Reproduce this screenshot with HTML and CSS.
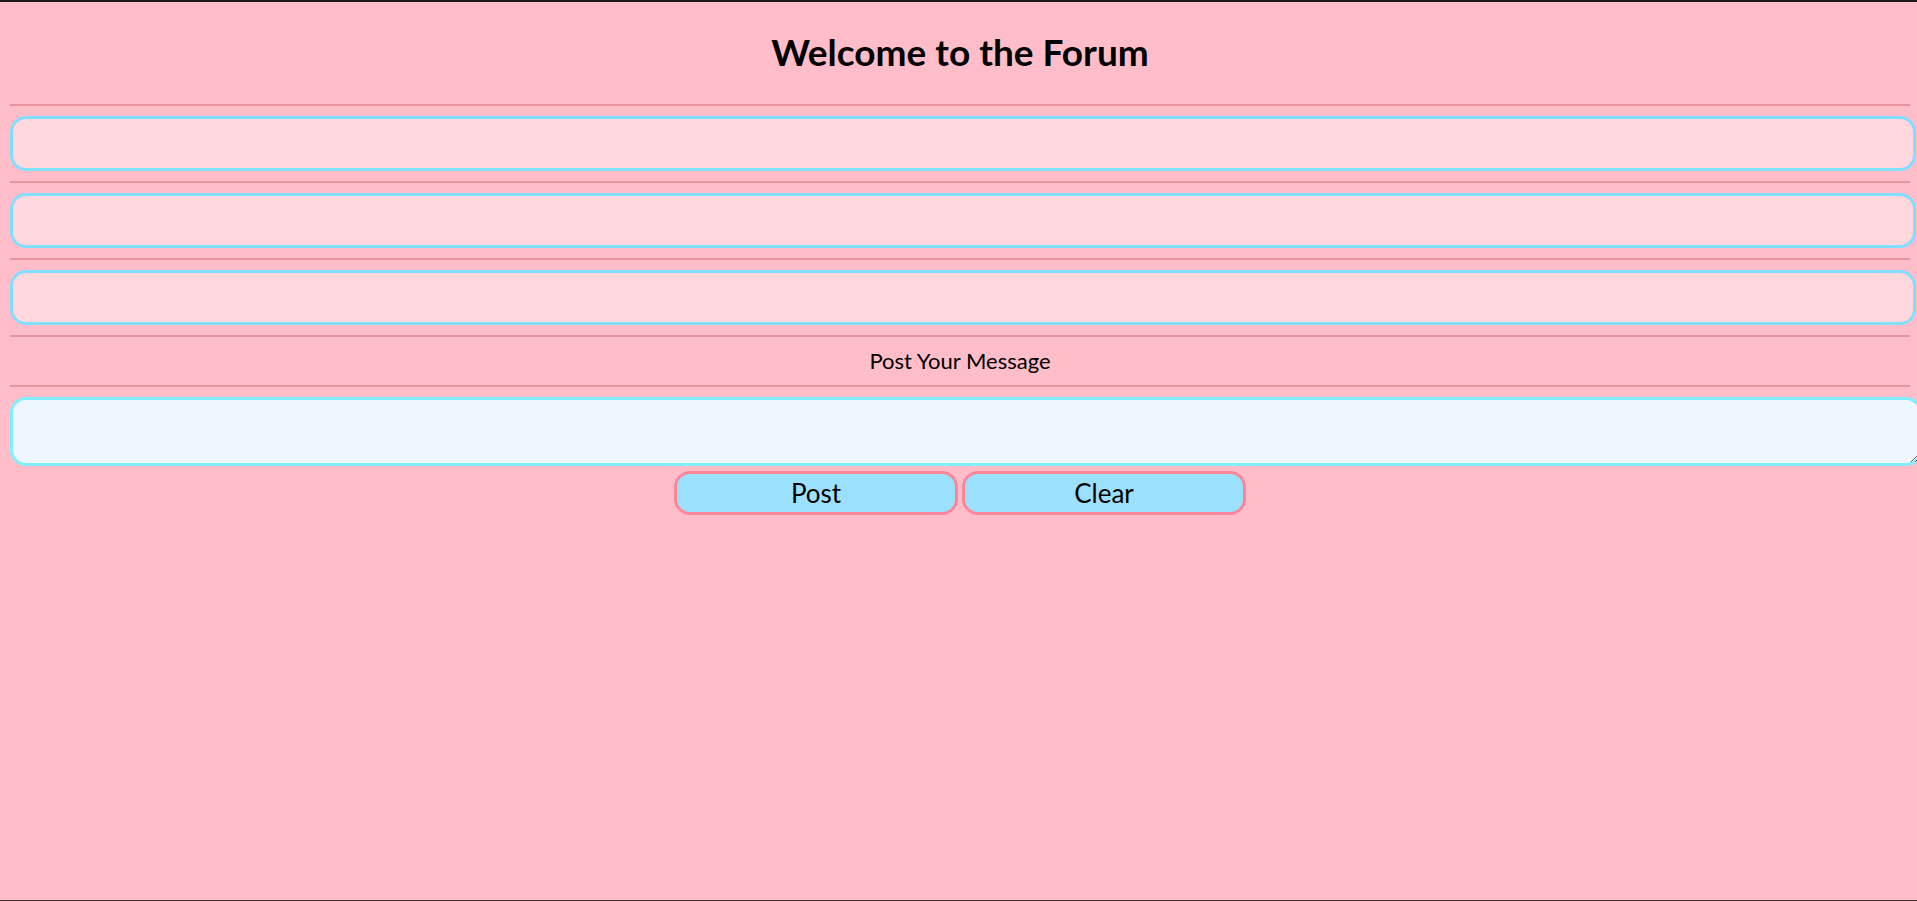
FILE: index.html
```html
<!DOCTYPE html>
<html lang="en">
<head>
<meta charset="utf-8">
<title>Forum</title>
<link rel="stylesheet" href="styles.css">
</head>
<body>
<div class="page">
  <h1 class="title">Welcome to the Forum</h1>
  <hr class="rule">
  <input class="field" type="text">
  <hr class="rule">
  <input class="field" type="text">
  <hr class="rule">
  <input class="field" type="text">
  <hr class="rule">
  <p class="label">Post Your Message</p>
  <hr class="rule">
  <textarea class="message"></textarea>
  <div class="actions">
    <button class="btn" type="button">Post</button>
    <button class="btn" type="button">Clear</button>
  </div>
</div>
</body>
</html>
```

FILE: styles.css
```css
html {
  overflow: hidden;
  background: #ffbdc9;
}
body {
  margin: 0;
  height: 901px;
  box-sizing: border-box;
  border-top: 2px solid #1d1a1f;
  border-bottom: 1px solid #333333;
  background: #ffbdc9;
  font-family: Lato, "Open Sans", sans-serif;
  color: #000;
}
.page {
  margin-left: 10px;
  width: 1900px;
  display: flex;
  flex-direction: column;
}
.title {
  margin: 0;
  height: 102px;
  line-height: 100px;
  text-align: center;
  font-size: 37px;
  font-weight: 700;
}
.rule {
  margin: 0;
  height: 0;
  border: none;
  border-top: 2px solid #e8949f;
}
.field {
  display: block;
  margin: 10px 0;
  width: 1900px;
  box-sizing: content-box;
  height: 49px;
  padding: 0;
  border: 3px solid #80dfff;
  border-radius: 16px;
  background: #ffd7dc;
  outline: none;
}
.label {
  margin: 0;
  height: 48px;
  line-height: 48px;
  text-align: center;
  font-size: 22px;
}
.message {
  display: block;
  margin: 10px 0 0;
  width: 1906px;
  height: 63px;
  box-sizing: content-box;
  padding: 0;
  border: 3px solid #80efff;
  border-radius: 16px;
  background: #eef7ff;
  outline: none;
  resize: both;
}
.actions {
  display: flex;
  justify-content: center;
  gap: 4px;
  margin-top: 5px;
}
.btn {
  width: 284px;
  height: 44px;
  box-sizing: border-box;
  border: 3px solid #ff8599;
  border-radius: 16px;
  background: #9be1fe;
  font-family: Lato, "Open Sans", sans-serif;
  font-size: 26px;
  color: #000;
  padding: 0;
}
```
